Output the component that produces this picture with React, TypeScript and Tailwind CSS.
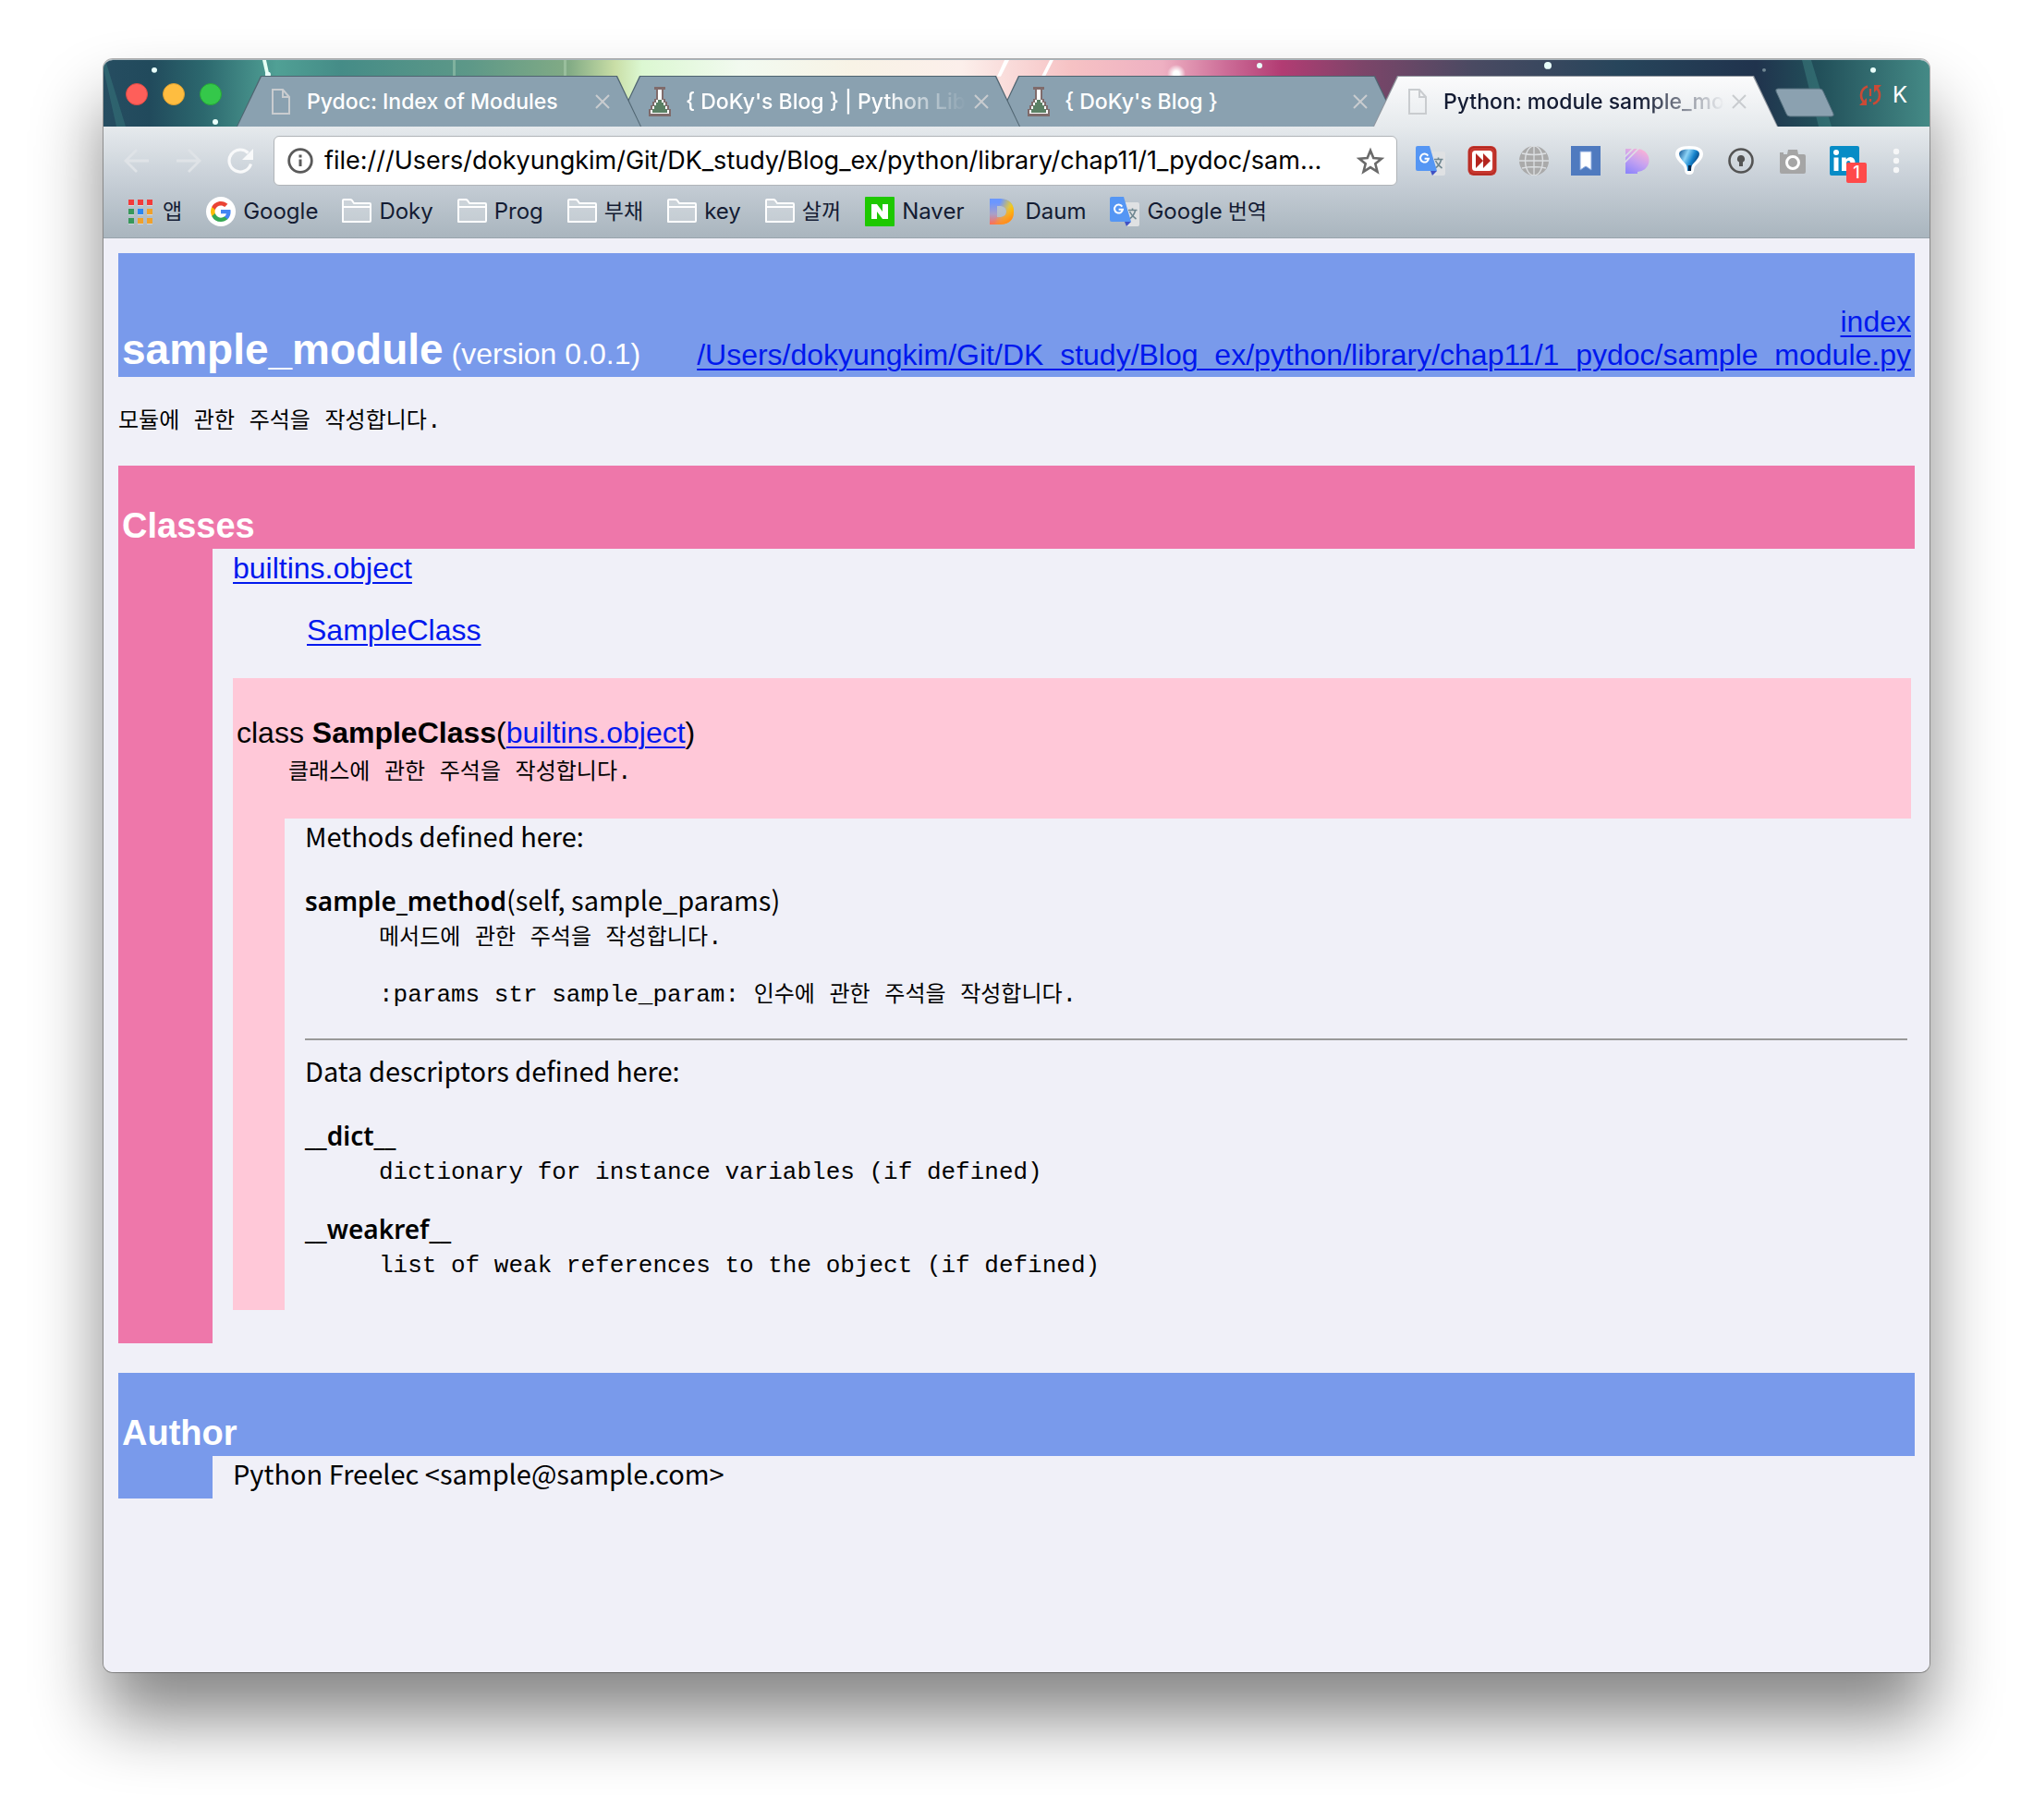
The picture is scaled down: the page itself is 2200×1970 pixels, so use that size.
import type { ReactNode } from "react";

const UI = "font-['Inter','Noto_Sans_CJK_KR',sans-serif]";
const MONO = "font-['Liberation_Mono','Noto_Sans_CJK_KR',monospace]";
const BODY = "font-['Noto_Sans_CJK_KR',sans-serif] text-[29px] leading-8";
const LINK = "text-[#0018ee] underline decoration-2 underline-offset-[4px]";

/* ---------- icons ---------- */

function PageIcon() {
  return (
    <svg viewBox="0 0 32 32" className="size-8 shrink-0" fill="none" stroke="#c9cccf" strokeWidth="2">
      <path d="M7 3h11l7 8v18H7z" />
      <path d="M18 3v8h7" />
    </svg>
  );
}

function FlaskIcon() {
  return (
    <svg viewBox="0 0 32 32" className="size-8 shrink-0" shapeRendering="crispEdges">
      <path d="M10 0h12v3h-2v10h2v3h2v4h2v4h2v8H4v-8h2v-4h2v-4h2v-3h2V3h-2z" fill="#7f6b6b" />
      <path d="M14 3h4v11h2v3h2v4h2v4h2v4H6v-4h2v-4h2v-4h2v-3h2z" fill="#fff" />
      <path d="M14 14h4v3h2v3h2v4h2v4H8v-4h2v-4h2v-3h2z" fill="#5a8064" />
    </svg>
  );
}

function FolderIcon() {
  return (
    <svg viewBox="0 0 32 32" className="size-8 shrink-0" fill="none" stroke="#fff" strokeWidth="2" strokeLinejoin="round">
      <path d="M1 27V4q0-1 1-1h7q1 0 2 1l2 3h17q1 0 1 1v18q0 1-1 1z" fill="#ffffff40" />
      <path d="M1 11h30" />
    </svg>
  );
}

function AppsIcon() {
  return (
    <svg viewBox="0 0 32 32" className="size-8 shrink-0" shapeRendering="crispEdges">
      <path d="M3 9h6v1H3zM13 9h6v1h-6zM23 9h6v1h-6zM3 19h6v1H3zM13 19h6v1h-6zM23 19h6v1h-6zM3 29h6v1H3zM13 29h6v1h-6zM23 29h6v1h-6z" fill="#ffffff66" />
      <path d="M3 3h6v6H3zM13 3h6v6h-6zM23 3h6v6h-6z" fill="#f33b3a" />
      <path d="M3 13h6v6H3zM3 23h6v6H3z" fill="#37985a" />
      <path d="M13 13h6v6h-6z" fill="#2a86f3" />
      <path d="M23 13h6v6h-6zM13 23h6v6h-6zM23 23h6v6h-6z" fill="#f0a12b" />
    </svg>
  );
}

function GoogleIcon() {
  return (
    <svg viewBox="0 0 32 32" className="size-8 shrink-0">
      <circle cx="16" cy="16" r="16" fill="#fff" />
      <g transform="translate(4 4)">
        <path fill="#4285F4" d="M22.56 12.25c0-.78-.07-1.53-.2-2.25H12v4.26h5.92a5.06 5.06 0 0 1-2.2 3.32v2.77h3.57c2.08-1.92 3.27-4.74 3.27-8.1z" />
        <path fill="#34A853" d="M12 23c2.97 0 5.46-.98 7.28-2.66l-3.57-2.77c-.98.66-2.23 1.06-3.71 1.06-2.86 0-5.29-1.93-6.16-4.53H2.18v2.84A11 11 0 0 0 12 23z" />
        <path fill="#FBBC05" d="M5.84 14.09a6.6 6.6 0 0 1 0-4.18V7.07H2.18a11 11 0 0 0 0 9.86z" />
        <path fill="#EA4335" d="M12 5.38c1.62 0 3.06.56 4.21 1.64l3.15-3.15C17.45 2.09 14.97 1 12 1 7.7 1 3.99 3.47 2.18 7.07l3.66 2.84C6.71 7.31 9.14 5.38 12 5.38z" />
      </g>
    </svg>
  );
}

function TranslateIcon() {
  return (
    <svg viewBox="0 0 32 32" className="size-8 shrink-0">
      <path d="M14 6h16q2 0 2 2v22q0 2-2 2H18z" fill="#dfe1e3" />
      <path d="M20 14.500h9.500M24.500 12.500v2M27.500 15q-1.500 6-6.500 9M21.500 16q2 4.500 7 8" stroke="#6f8791" strokeWidth="1.600" fill="none" />
      <path d="M16 27h7l-5 5z" fill="#3f51c4" />
      <path d="M2 0h13l8 27H2q-2 0-2-2V2q0-2 2-2z" fill="#5596f4" />
      <path d="M13.300 10.600a4.500 4.500 0 1 0 .7 3.100H9.600" stroke="#fff" strokeWidth="2" fill="none" />
    </svg>
  );
}

function NaverIcon() {
  return (
    <svg viewBox="0 0 32 32" className="size-8 shrink-0">
      <rect width="32" height="32" rx="1" fill="#1ec800" />
      <path d="M7 8h6l6 8V8h6v16h-6l-6-8v8H7z" fill="#fff" />
    </svg>
  );
}

function DaumIcon() {
  return (
    <svg viewBox="0 0 32 32" className="size-8 shrink-0">
      <defs>
        <linearGradient id="daum-a" x1="0" y1="0" x2="0" y2="1">
          <stop offset="0.150" stopColor="#6b97ff" />
          <stop offset="0.600" stopColor="#a99fc8" />
          <stop offset="1" stopColor="#ff6a5c" />
        </linearGradient>
        <linearGradient id="daum-b" x1="0" y1="0.300" x2="1" y2="0.600">
          <stop offset="0.350" stopColor="#ffd21e" stopOpacity="0" />
          <stop offset="0.900" stopColor="#ffd800" />
        </linearGradient>
        <linearGradient id="daum-c" x1="0.400" y1="0.600" x2="0.700" y2="1">
          <stop offset="0" stopColor="#ff8a1e" stopOpacity="0" />
          <stop offset="1" stopColor="#ff8420" />
        </linearGradient>
      </defs>
      {["url(#daum-a)", "url(#daum-b)", "url(#daum-c)"].map((fill) => (
        <path key={fill} d="M2 2h12q14 1 14 14T14 30H2zM10 10v12h4q6-1 6-6t-6-6z" fill={fill} fillRule="evenodd" />
      ))}
    </svg>
  );
}

function FastForwardIcon() {
  return (
    <svg viewBox="0 0 32 32" className="size-8">
      <rect x="0.500" y="0" width="31" height="32" rx="6" fill="#c8372f" />
      <rect x="2" y="1.500" width="28" height="29" rx="5" fill="none" stroke="#a8261f" strokeWidth="1" />
      <rect x="5" y="5" width="22" height="22" rx="3.500" fill="#fff" />
      <path d="M9 8l8 8-8 8zM17 8l8 8-8 8z" fill="#b4251f" />
    </svg>
  );
}

function GlobeIcon() {
  return (
    <svg viewBox="0 0 32 32" className="size-8" fill="none" stroke="#dcdfe2" strokeWidth="1.300">
      <circle cx="16" cy="16" r="16" fill="#aaa" stroke="none" />
      <ellipse cx="16" cy="16" rx="9.500" ry="16" />
      <path d="M16 0v32M0 16h32M3 8q13 3 26 0M3 24q13-3 26 0" />
    </svg>
  );
}

function BookmarkIcon() {
  return (
    <svg viewBox="0 0 32 32" className="size-8">
      <rect width="32" height="32" fill="#4f7abf" />
      <path d="M10 6h12v20l-6-4-6 4z" fill="#fff" stroke="#86a6dc" strokeWidth="1" />
    </svg>
  );
}

function PIcon() {
  return (
    <svg viewBox="0 0 32 32" className="size-8">
      <defs>
        <linearGradient id="p-fill" x1="0.700" y1="0" x2="0.200" y2="1">
          <stop offset="0" stopColor="#fab3d6" />
          <stop offset="0.500" stopColor="#c6a2f0" />
          <stop offset="1" stopColor="#8f86fb" />
        </linearGradient>
      </defs>
      <path d="M3 3h13a12.500 12.500 0 0 1 0 25v2H3z" fill="url(#p-fill)" />
      <path d="M2 12L12 2M2 18L18 2" stroke="#dde1e5" strokeWidth="1.600" />
    </svg>
  );
}

function BalloonIcon() {
  return (
    <svg viewBox="0 0 32 32" className="size-8">
      <defs>
        <linearGradient id="balloon" x1="0" y1="0" x2="1" y2="0.500">
          <stop offset="0" stopColor="#0a4f90" />
          <stop offset="0.400" stopColor="#8dd3f6" />
          <stop offset="0.700" stopColor="#1583cc" />
          <stop offset="1" stopColor="#083a70" />
        </linearGradient>
      </defs>
      <path d="M16 0q15 0 15 9 0 5-8 12-2 2-2 5 0 5-5 5t-5-5q0-3-2-5-8-7-8-12 0-9 15-9z" fill="#fff" />
      <path d="M16 3.500q11 0 11 5 0 4-7 11-2 2-2 7.500h-4q0-5.500-2-7.500-7-7-7-11 0-5 11-5z" fill="url(#balloon)" />
      <path d="M15 21h3v6h-3z" fill="#0b2747" />
    </svg>
  );
}

function KeyholeIcon() {
  return (
    <svg viewBox="0 0 32 32" className="size-8" fill="none">
      <circle cx="16" cy="16" r="12.500" stroke="#545454" strokeWidth="2.600" />
      <path d="M16 10a4 4 0 0 1 2 7.500V22h-4v-4.500a4 4 0 0 1 2-7.500z" fill="#545454" />
    </svg>
  );
}

function CameraIcon() {
  return (
    <svg viewBox="0 0 32 32" className="size-8">
      <path d="M2 10V7h4v2h4l1-5h10l1 5h6q2 0 2 2v17q0 2-2 2H4q-2 0-2-2z" fill="#a5a5a5" />
      <circle cx="16" cy="18" r="6.500" fill="#a5a5a5" stroke="#fff" strokeWidth="3" />
    </svg>
  );
}

function LinkedInIcon() {
  return (
    <svg viewBox="0 0 32 32" className="size-8">
      <rect width="32" height="32" rx="2" fill="#078cc6" />
      <circle cx="7" cy="7" r="3" fill="#fff" />
      <path d="M4.500 12.500h5V27h-5zM13 12.500h4.700v2q1.500-2.500 4.600-2.500 5.200 0 5.200 6.500V27h-5v-8q0-3-2.200-3T18 19v8h-5z" fill="#fff" />
    </svg>
  );
}

function SyncProblemIcon() {
  return (
    <svg viewBox="0 0 24 24" className="size-6" fill="none" stroke="#cb4a36" strokeWidth="2.600">
      <path d="M9 2.500Q2 5 2 12q0 5 4 8.500M15 21.500q7-2.500 7-9.500 0-5-4-8.500" />
      <path d="M0 23h8v-8zM24 1h-8v8z" fill="#cb4a36" stroke="none" />
      <path d="M12 5v8M12 16v3" strokeWidth="2.200" />
    </svg>
  );
}

/* ---------- window chrome ---------- */

function ThemeArt() {
  return (
    <svg className="absolute inset-0 h-full w-full" viewBox="0 0 1976 73" preserveAspectRatio="none" aria-hidden="true">
      <defs>
        <linearGradient id="sky" gradientUnits="userSpaceOnUse" x1="0" y1="0" x2="1976" y2="0">
          <stop offset="0" stopColor="#264d61" />
          <stop offset="0.025" stopColor="#214a5c" />
          <stop offset="0.055" stopColor="#2c686e" />
          <stop offset="0.095" stopColor="#50a095" />
          <stop offset="0.130" stopColor="#458c87" />
          <stop offset="0.200" stopColor="#5d9888" />
          <stop offset="0.255" stopColor="#82ab85" />
          <stop offset="0.280" stopColor="#c9dea6" />
          <stop offset="0.295" stopColor="#dcf8d2" />
          <stop offset="0.350" stopColor="#f2faf0" />
          <stop offset="0.410" stopColor="#f8f3e6" />
          <stop offset="0.470" stopColor="#fcefeb" />
          <stop offset="0.530" stopColor="#f6c2c4" />
          <stop offset="0.580" stopColor="#eeb0c2" />
          <stop offset="0.615" stopColor="#cc6c97" />
          <stop offset="0.645" stopColor="#b23c73" />
          <stop offset="0.690" stopColor="#7c4569" />
          <stop offset="0.750" stopColor="#4a4a62" />
          <stop offset="0.830" stopColor="#27455b" />
          <stop offset="0.905" stopColor="#20334d" />
          <stop offset="0.940" stopColor="#22505a" />
          <stop offset="1" stopColor="#448a86" />
        </linearGradient>
        <radialGradient id="flare">
          <stop offset="0.300" stopColor="#fff" />
          <stop offset="1" stopColor="#fff" stopOpacity="0" />
        </radialGradient>
      </defs>
      <rect width="1976" height="73" fill="url(#sky)" />
      <path d="M0 10L14 73H24L2 0z" fill="#3f8d8a" opacity="0.350" />
      <path d="M1838 0l18 73h14L1848 0z" fill="#4b9a94" opacity="0.350" />
      <path d="M172 0l4 18 4 1-4-19z" fill="#e6fff4" />
      <path d="M378 0h3v18h-3zM498 0h3v18h-3z" fill="#c6e6c8" opacity="0.350" />
      <path d="M975 0l-8 18h4l9-18zM1024 0l-9 18h4l9-18z" fill="#fff" />
      <circle cx="1161" cy="15" r="10" fill="url(#flare)" />
      <g fill="#e9fffa">
        <circle cx="55" cy="11" r="3" />
        <circle cx="121" cy="68" r="3" />
        <circle cx="178" cy="16" r="3" />
        <circle cx="1251" cy="6" r="3" />
        <circle cx="1563" cy="6" r="4" />
        <circle cx="1797" cy="11" r="2" opacity="0.400" />
        <circle cx="1915" cy="11" r="3" />
      </g>
    </svg>
  );
}

type TabProps = { title: string; icon: ReactNode; active?: boolean; fade?: boolean; layer: string };

function Tab({ title, icon, active, fade, layer }: TabProps) {
  const shape = "[clip-path:polygon(26px_0,calc(100%-26px)_0,100%_100%,0_100%)]";
  const frame = active ? "bg-[#8f959d]" : "bg-[#4f6470]";
  const face = active ? "bg-linear-to-b from-[#fbfbfc] to-[#e6eaed] text-[#141c33]" : "bg-[#8aa1b0] text-white";
  const mask = fade ? "[mask-image:linear-gradient(to_right,#000_calc(100%-90px),transparent)]" : "";
  return (
    <div className={`relative -mr-7 min-w-0 flex-[0_1_438px] px-px pt-px ${layer} ${shape} ${frame}`} role="tab" aria-selected={!!active}>
      <div className={`flex h-[54px] items-center pr-[33px] pl-[31px] ${shape} ${face}`}>
        {icon}
        <span className={`ml-3 min-w-0 flex-1 overflow-hidden text-[23px] leading-8 font-medium whitespace-nowrap ${mask}`}>
          {title}
        </span>
        <button aria-label={`Close ${title}`} className="ml-2 shrink-0">
          <svg viewBox="0 0 16 16" className="size-4" stroke="#c9cccf" strokeWidth="2">
            <path d="M1 1l14 14M15 1L1 15" />
          </svg>
        </button>
      </div>
    </div>
  );
}

function TabStrip() {
  return (
    <header className="relative overflow-hidden rounded-t-[10px] border-t border-[#a9b4ba]">
      <ThemeArt />
      <div className="relative flex h-[72px] items-end px-6">
        <div className="mb-[23px] flex shrink-0 gap-4">
          <button aria-label="Close window" className="size-6 rounded-full border border-[#dc4a44] bg-[#fe5f5a]" />
          <button aria-label="Minimize window" className="size-6 rounded-full border border-[#dc9f30] bg-[#febd40]" />
          <button aria-label="Zoom window" className="size-6 rounded-full border border-[#27a637] bg-[#34c84a]" />
        </div>
        <div className="ml-4 flex min-w-0 flex-1 items-end" role="tablist">
          <Tab title="Pydoc: Index of Modules" icon={<PageIcon />} layer="z-30" />
          <Tab title="{ DoKy's Blog } | Python Library" icon={<FlaskIcon />} fade layer="z-20" />
          <Tab title="{ DoKy's Blog }" icon={<FlaskIcon />} layer="z-10" />
          <Tab title="Python: module sample_module" icon={<PageIcon />} active fade layer="z-40" />
          <button aria-label="New tab" className="mb-2.5 ml-6 shrink-0">
            <svg viewBox="0 0 66 32" className="h-8 w-[66px]">
              <path d="M4 1h45q3 0 4 3l11 24q1 3-2 3H17q-3 0-4-3L2 4q-1-3 2-3z" fill="#8ba1b0" stroke="#55707e" />
            </svg>
          </button>
        </div>
        <button aria-label="Profile K" className="mb-[18px] flex shrink-0 items-center gap-3 text-2xl text-white">
          <SyncProblemIcon />K
        </button>
      </div>
    </header>
  );
}

function NavButton({ label, children, tone }: { label: string; children: ReactNode; tone: string }) {
  return (
    <button aria-label={label} className={tone}>
      <svg viewBox="0 0 32 32" className="size-8" fill="none" stroke="currentColor" strokeWidth="2.800">
        {children}
      </svg>
    </button>
  );
}

const EXTENSIONS: [string, ReactNode][] = [
  ["Translate", <TranslateIcon />],
  ["Fast forward", <FastForwardIcon />],
  ["Globe", <GlobeIcon />],
  ["Bookmark", <BookmarkIcon />],
  ["P", <PIcon />],
  ["Balloon", <BalloonIcon />],
  ["Password manager", <KeyholeIcon />],
  ["Screenshot", <CameraIcon />],
];

function AddressRow() {
  return (
    <div className="flex items-center gap-5 px-5 pt-2.5">
      <nav className="flex shrink-0 gap-6">
        <NavButton label="Back" tone="text-[#dfe3e7]"><path d="M29 16H4M16 4L4 16l12 12" /></NavButton>
        <NavButton label="Forward" tone="text-[#dfe3e7]"><path d="M3 16h25M16 4l12 12-12 12" /></NavButton>
        <NavButton label="Reload" tone="text-[#f8f9fa]">
          <path d="M27.500 19.500a12 12 0 1 1-3-12" strokeWidth="3.200" />
          <path d="M30 3v12H18z" fill="currentColor" stroke="none" />
        </NavButton>
      </nav>
      <div className="flex h-[54px] min-w-0 flex-1 items-center rounded-md border border-[#b0b4b8] bg-white px-3">
        <svg viewBox="0 0 32 32" className="size-8 shrink-0" fill="none" stroke="#5a5a5a" strokeWidth="2.800">
          <circle cx="16" cy="16" r="12.300" />
          <path d="M16 14.500V22M16 9.500v3" strokeWidth="3" />
        </svg>
        <input
          aria-label="Address"
          readOnly
          className="ml-2.5 min-w-0 flex-1 bg-transparent text-[27px] leading-9 text-black outline-none"
          value="file:///Users/dokyungkim/Git/DK_study/Blog_ex/python/library/chap11/1_pydoc/sam..."
        />
        <button aria-label="Bookmark this page" className="shrink-0">
          <svg viewBox="0 0 32 32" className="size-8" fill="none" stroke="#6a6a6a" strokeWidth="2.600">
            <path d="M16 5l3.300 8.100 8.700.6-6.700 5.600 2.200 8.500L16 23.100l-7.500 4.700 2.200-8.500L4 13.700l8.700-.6z" />
          </svg>
        </button>
      </div>
      <div className="flex shrink-0 items-center gap-6">
        {EXTENSIONS.map(([name, icon]) => (
          <button key={name} aria-label={name}>{icon}</button>
        ))}
        <button aria-label="LinkedIn, 1 notification" className="relative">
          <LinkedInIcon />
          <span className="absolute -right-2 -bottom-2 flex size-[22px] items-center justify-center rounded-xs bg-[#ff4a4a] text-lg leading-none font-medium text-white">
            1
          </span>
        </button>
        <button aria-label="Menu">
          <svg viewBox="0 0 32 32" className="size-8" fill="#f6f7f8">
            <circle cx="16" cy="6" r="3.200" />
            <circle cx="16" cy="16" r="3.200" />
            <circle cx="16" cy="26" r="3.200" />
          </svg>
        </button>
      </div>
    </div>
  );
}

const BOOKMARKS: [string, ReactNode][] = [
  ["앱", <AppsIcon />],
  ["Google", <GoogleIcon />],
  ["Doky", <FolderIcon />],
  ["Prog", <FolderIcon />],
  ["부채", <FolderIcon />],
  ["key", <FolderIcon />],
  ["살꺼", <FolderIcon />],
  ["Naver", <NaverIcon />],
  ["Daum", <DaumIcon />],
  ["Google 번역", <TranslateIcon />],
];

function BookmarksBar() {
  return (
    <nav className="flex h-14 items-center gap-[26px] px-6 text-[#141c33]">
      {BOOKMARKS.map(([label, icon]) => (
        <a key={label} href="#" className="flex shrink-0 items-center gap-2">
          {icon}
          <span className="flex items-baseline gap-1.5 leading-8 whitespace-nowrap">
            {label.split(" ").map((word) => (
              <span key={word} className={/[가-힣]/.test(word) ? "text-[23px]" : "text-[24px]"}>{word}</span>
            ))}
          </span>
        </a>
      ))}
    </nav>
  );
}

/* ---------- document ---------- */

/* Monospaced doc text; Hangul words are set a little smaller than the Latin. */
function Doc({ children, className = "" }: { children: string; className?: string }) {
  return (
    <p className={`${MONO} text-[26px] leading-[31px] whitespace-pre-wrap ${className}`}>
      {children.split(/([가-힣]+)/).map((part, i) =>
        i % 2 ? <span key={i} className="text-[24px] leading-none">{part}</span> : part
      )}
    </p>
  );
}

function Section({ title, tone, children }: { title: string; tone: string; children: ReactNode }) {
  return (
    <section>
      <h2 className={`px-1 pt-[45px] pb-[5px] text-[38px] leading-10 font-bold text-white ${tone}`}>{title}</h2>
      <div className="flex">
        <div className={`w-[102px] shrink-0 ${tone}`} />
        <div className="min-w-0 flex-1 pr-1 pl-[22px]">{children}</div>
      </div>
    </section>
  );
}

function Member({ name, args, doc }: { name: string; args?: string; doc: string }) {
  return (
    <>
      <dt>
        <strong className="font-['Noto_Sans',sans-serif] text-[28px] leading-none font-semibold">{name}</strong>
        {args}
      </dt>
      <dd className="mt-[11px] pl-20"><Doc>{doc}</Doc></dd>
    </>
  );
}

function PydocPage() {
  return (
    <main className="rounded-b-[10px] bg-[#f0f0f8] px-4 pt-4 pb-[188px] font-['Liberation_Sans',sans-serif] text-[32px] leading-9 text-black">
      <div className="flex items-end justify-between gap-4 bg-[#799aeb] px-1 pt-14 pb-1.5">
        <h1 className="shrink-0 text-white">
          <strong className="text-[46px] leading-[48px]">sample_module</strong> (version 0.0.1)
        </h1>
        <div className="text-right">
          <a href="#index" className={LINK}>index</a>
          <br />
          <a href="#source" className={LINK}>/Users/dokyungkim/Git/DK_study/Blog_ex/python/library/chap11/1_pydoc/sample_module.py</a>
        </div>
      </div>

      <Doc className="mt-[33px] mb-8">모듈에 관한 주석을 작성합니다.</Doc>

      <Section title="Classes" tone="bg-[#ee77aa]">
        <div className="pt-[3px] pb-9">
          <a href="#builtins" className={LINK}>builtins.object</a>
          <div className="mt-[31px] mb-[34px] pl-20">
            <a href="#SampleClass" className={LINK}>SampleClass</a>
          </div>

          <article id="SampleClass">
            <div className="bg-[#ffc8d8] px-1 pt-[41px] pb-[34px]">
              <h3>
                class <strong>SampleClass</strong>(<a href="#builtins" className={LINK}>builtins.object</a>)
              </h3>
              <Doc className="mt-2.5 pl-14">클래스에 관한 주석을 작성합니다.</Doc>
            </div>
            <div className="flex">
              <div className="w-14 shrink-0 bg-[#ffc8d8]" />
              <div className={`min-w-0 flex-1 pt-0.5 pr-1 pb-8 pl-[22px] ${BODY}`}>
                <p className="mb-[37px]">Methods defined here:</p>
                <dl>
                  <Member
                    name="sample_method"
                    args="(self, sample_params)"
                    doc={"메서드에 관한 주석을 작성합니다.\n\n:params str sample_param: 인수에 관한 주석을 작성합니다."}
                  />
                </dl>
                <hr className="mt-[31px] mb-4 border-t-2 border-[#999]" />
                <p className="mb-[37px]">Data descriptors defined here:</p>
                <dl className="mb-[27px]">
                  <Member name="__dict__" doc="dictionary for instance variables (if defined)" />
                </dl>
                <dl>
                  <Member name="__weakref__" doc="list of weak references to the object (if defined)" />
                </dl>
              </div>
            </div>
          </article>
        </div>
      </Section>

      <div className="mt-8">
        <Section title="Author" tone="bg-[#799aeb]">
          <p className={`pt-0.5 pb-3 ${BODY}`}>Python Freelec &lt;sample@sample.com&gt;</p>
        </Section>
      </div>
    </main>
  );
}

export default function App() {
  return (
    <div className="min-h-screen bg-white px-28 pt-16 pb-40">
      <div className="rounded-[10px] shadow-[0_0_0_1px_rgba(0,0,0,0.3),0_50px_76px_rgba(0,0,0,0.48)]">
        <div className={UI}>
          <TabStrip />
          <div className="border-b border-[#98a3ac] bg-linear-to-b from-[#e6eaed] via-[#c6ced6] to-[#a9b5be]">
            <AddressRow />
            <BookmarksBar />
          </div>
        </div>
        <PydocPage />
      </div>
    </div>
  );
}
